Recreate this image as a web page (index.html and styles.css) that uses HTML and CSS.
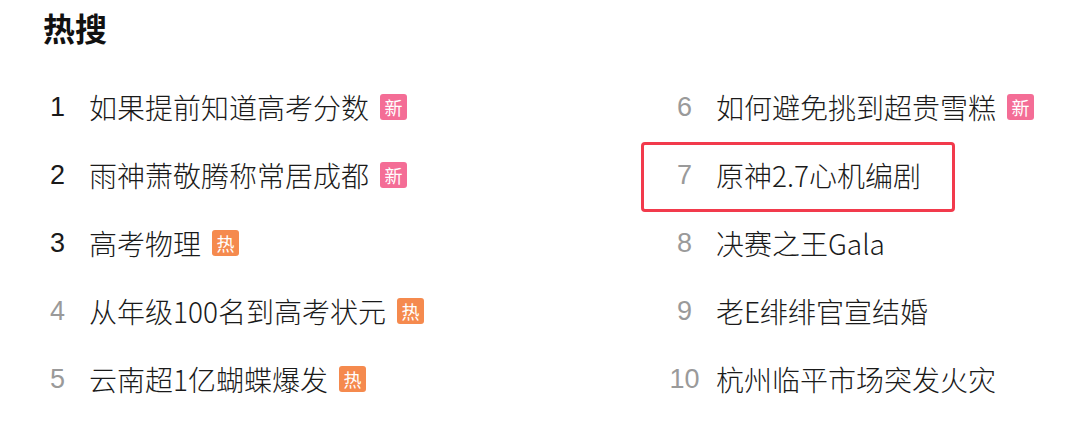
FILE: index.html
```html
<!DOCTYPE html>
<html lang="zh">
<head>
<meta charset="utf-8">
<link rel="stylesheet" href="styles.css">
</head>
<body>
<div class="page">
  <h1 class="title">热搜</h1>
  <ol class="list">
    <li class="item top"><span class="num">1</span><span class="text">如果提前知道高考分数</span><span class="badge new">新</span></li>
    <li class="item"><span class="num">6</span><span class="text">如何避免挑到超贵雪糕</span><span class="badge new">新</span></li>
    <li class="item top"><span class="num">2</span><span class="text">雨神萧敬腾称常居成都</span><span class="badge new">新</span></li>
    <li class="item marked"><span class="num">7</span><span class="text">原神2.7心机编剧</span></li>
    <li class="item top"><span class="num">3</span><span class="text">高考物理</span><span class="badge hot">热</span></li>
    <li class="item"><span class="num">8</span><span class="text">决赛之王Gala</span></li>
    <li class="item"><span class="num">4</span><span class="text">从年级100名到高考状元</span><span class="badge hot">热</span></li>
    <li class="item"><span class="num">9</span><span class="text">老E绯绯官宣结婚</span></li>
    <li class="item"><span class="num">5</span><span class="text">云南超1亿蝴蝶爆发</span><span class="badge hot">热</span></li>
    <li class="item"><span class="num">10</span><span class="text">杭州临平市场突发火灾</span></li>
  </ol>
</div>
</body>
</html>
```
FILE: styles.css
```css
* { box-sizing: border-box; }
html, body { margin: 0; padding: 0; background: #ffffff; }
body {
  font-family: "Noto Sans CJK SC", "Noto Sans", sans-serif;
  color: #1f1f1f;
}
.page {
  padding: 6px 0 0 40px;
}
.title {
  margin: 0 0 0 3px;
  font-size: 32px;
  line-height: 42px;
  font-weight: 700;
  color: #111;
}
.list {
  list-style: none;
  margin: 25px 0 0 0;
  padding: 0;
  display: grid;
  grid-template-columns: 627px 1fr;
  grid-auto-rows: 68px;
}
.item {
  position: relative;
  display: flex;
  align-items: center;
}
.num {
  width: 35px;
  text-align: center;
  font-family: "Liberation Sans", "Noto Sans", sans-serif;
  font-size: 27px;
  color: #9a9a9a;
  margin-right: 14px;
}
.item.top .num { color: #1a1a1a; }
.text {
  font-size: 28px;
  line-height: 40px;
  font-weight: 300;
  color: #1a1a1a;
  white-space: nowrap;
}
.badge {
  margin-left: 11px;
  width: 27px;
  height: 26px;
  border-radius: 3px;
  color: #fff;
  font-size: 18px;
  line-height: 26px;
  text-align: center;
}
.badge.new { background: #f46d96; }
.badge.hot { background: #f58a4e; }
.marked::after {
  content: "";
  position: absolute;
  left: -26px;
  top: 1px;
  width: 308px;
  height: 64px;
  border: 3px solid #f23a4c;
  border-radius: 4px;
}
```
